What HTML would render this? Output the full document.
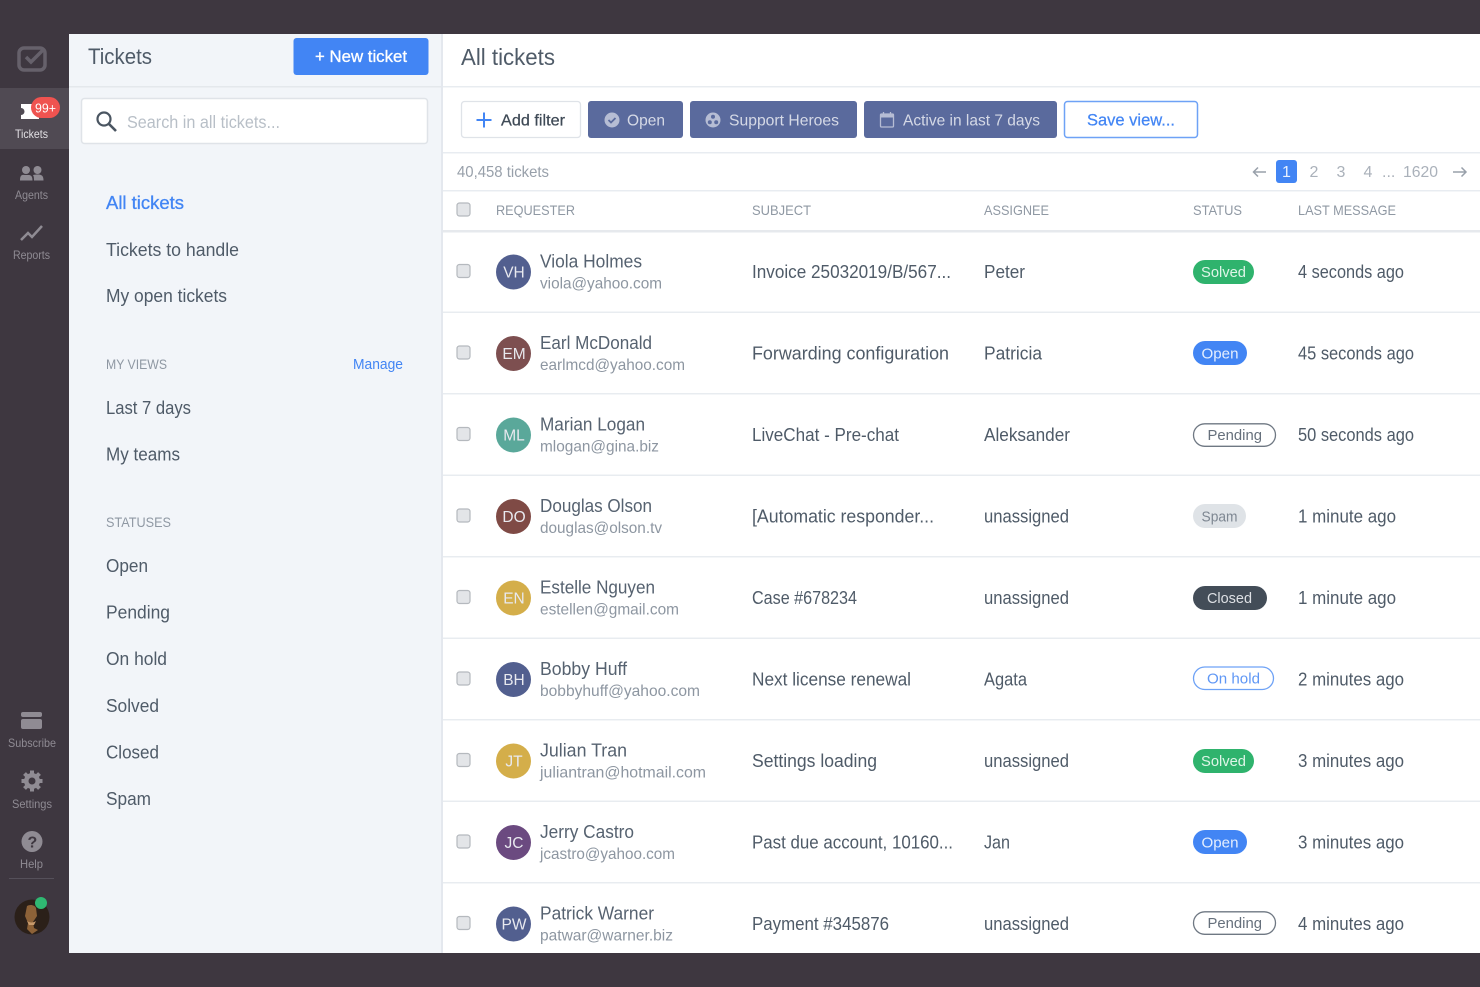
<!DOCTYPE html>
<html><head><meta charset="utf-8"><title>Tickets</title>
<style>
html,body{margin:0;padding:0;width:1480px;height:987px;overflow:hidden;background:#3e3740}
svg{display:block;filter:blur(.35px)}
text{font-family:"Liberation Sans",sans-serif}
.n{font-size:18px;fill:#566270}
.e{font-size:16px;fill:#8d96a1}
.t{font-size:18px;fill:#4f5b68}
.h{font-size:14px;fill:#8f98a3}
.s{font-size:12px;fill:#8f8b93}
.w{font-size:15px;fill:#fff}
.f{font-size:16px;fill:#d5d9e6}
.p{font-size:16px;fill:#aab1ba}
.i{fill:#8f8b93}
</style></head><body>
<svg xmlns="http://www.w3.org/2000/svg" width="1480" height="987" viewBox="0 0 1480 987">
<rect width="1480" height="987" fill="#3e3740"/>
<rect x="69" y="34" width="373" height="919" fill="#f2f5f9"/>
<rect x="441" y="34" width="2" height="919" fill="#e4e8ee"/>
<rect x="443" y="34" width="1037" height="919" fill="#fff"/>

<!-- sidebar -->
<rect x="0" y="88" width="69" height="61" fill="#504a53"/>
<rect x="19" y="48" width="26" height="22" rx="5" fill="none" stroke="#66616b" stroke-width="3.500"/>
<path d="M26 57l5 5 13-13" fill="none" stroke="#66616b" stroke-width="3.500"/>
<path d="M21 104h18v15H21v-4a3.500 3.500 0 0 0 0-7z" fill="#fff"/>
<rect x="31" y="97" width="29" height="21" rx="10.500" fill="#ef5350"/>
<text x="35" y="112.500" font-size="13" fill="#fff" textLength="21" lengthAdjust="spacingAndGlyphs">99+</text>
<text class="s" x="15" y="138" style="fill:#e2e0e4" textLength="33" lengthAdjust="spacingAndGlyphs">Tickets</text>
<circle cx="26" cy="170" r="4" class="i"/><circle cx="37.500" cy="170" r="4" class="i"/>
<path d="M20 180.500c0-7 3-5.500 6-5.500s6.500-1 6.500 5.500zM34 180.500c0-4-.5-4.500-1-5.500 2-.5 3-.5 4.500-.5 4 0 6 1 6 6z" class="i"/>
<text class="s" x="15" y="199" textLength="33" lengthAdjust="spacingAndGlyphs">Agents</text>
<path d="M21 240l7-7 4 4 10-11" fill="none" stroke="#8f8b93" stroke-width="2.500"/>
<text class="s" x="13" y="259" textLength="37" lengthAdjust="spacingAndGlyphs">Reports</text>
<rect x="21" y="712" width="21" height="5" rx="2" class="i"/><rect x="21" y="719" width="21" height="10" rx="2" class="i"/>
<text class="s" x="8" y="747" textLength="48" lengthAdjust="spacingAndGlyphs">Subscribe</text>
<path d="M32 770.500v21M21.500 781h21M24.500 773.500l15 15M39.500 773.500l-15 15" stroke="#8f8b93" stroke-width="4"/>
<circle cx="32" cy="781" r="8" class="i"/>
<circle cx="32" cy="781" r="3.500" fill="#3e3740"/>
<text class="s" x="12" y="808" textLength="40" lengthAdjust="spacingAndGlyphs">Settings</text>
<circle cx="32" cy="841.500" r="10.500" class="i"/>
<text x="27.500" y="847.500" font-size="16" font-weight="bold" fill="#3e3740">?</text>
<text class="s" x="20" y="868" textLength="23" lengthAdjust="spacingAndGlyphs">Help</text>
<rect x="9" y="878" width="45" height="1" fill="#55505a"/>
<circle cx="32" cy="917" r="17.500" fill="#2b2019"/>
<path d="M27 906c3-2 8-1 9 2l1 8-4 6 1 6 4 2-6 4-5-5 1-6-3-7z" fill="#8d6238"/>
<path d="M27 921c3 2 6 2 9 0l-2 4h-5z" fill="#c79a6c"/>
<circle cx="41" cy="903" r="6" fill="#2fb872"/>

<!-- left panel -->
<text x="88" y="64" font-size="22" fill="#4f5b68" textLength="64" lengthAdjust="spacingAndGlyphs">Tickets</text>
<rect x="293.500" y="38" width="135" height="37" rx="3" fill="#4285f4"/>
<text x="315" y="62" font-size="17" fill="#fff" stroke="#fff" stroke-width=".3" textLength="92" lengthAdjust="spacingAndGlyphs">+ New ticket</text>
<rect x="69" y="86" width="372" height="1.500" fill="#e4e8ec"/>
<rect x="81.500" y="98.500" width="346" height="45" rx="3" fill="#fff" stroke="#dfe3e8" stroke-width="1.500"/>
<circle cx="104" cy="119" r="6.500" fill="none" stroke="#4a5561" stroke-width="2.200"/>
<path d="M109 124l7 7" stroke="#4a5561" stroke-width="2.600"/>
<text x="127" y="128" font-size="17.500" fill="#b8bfc7" textLength="153" lengthAdjust="spacingAndGlyphs">Search in all tickets...</text>
<text x="106" y="209" font-size="18" fill="#4285f4" stroke="#4285f4" stroke-width=".3" textLength="78" lengthAdjust="spacingAndGlyphs">All tickets</text>
<text class="t" x="106" y="256" textLength="133" lengthAdjust="spacingAndGlyphs">Tickets to handle</text>
<text class="t" x="106" y="302" textLength="121" lengthAdjust="spacingAndGlyphs">My open tickets</text>
<text class="h" x="106" y="369" textLength="61" lengthAdjust="spacingAndGlyphs">MY VIEWS</text>
<text x="353" y="369" font-size="14.500" fill="#4285f4" textLength="50" lengthAdjust="spacingAndGlyphs">Manage</text>
<text class="t" x="106" y="414" textLength="85" lengthAdjust="spacingAndGlyphs">Last 7 days</text>
<text class="t" x="106" y="460.500" textLength="74" lengthAdjust="spacingAndGlyphs">My teams</text>
<text class="h" x="106" y="527" textLength="65" lengthAdjust="spacingAndGlyphs">STATUSES</text>
<text class="t" x="106" y="572" textLength="42" lengthAdjust="spacingAndGlyphs">Open</text>
<text class="t" x="106" y="618.500" textLength="64" lengthAdjust="spacingAndGlyphs">Pending</text>
<text class="t" x="106" y="665" textLength="61" lengthAdjust="spacingAndGlyphs">On hold</text>
<text class="t" x="106" y="712" textLength="53" lengthAdjust="spacingAndGlyphs">Solved</text>
<text class="t" x="106" y="758.500" textLength="53" lengthAdjust="spacingAndGlyphs">Closed</text>
<text class="t" x="106" y="805" textLength="45" lengthAdjust="spacingAndGlyphs">Spam</text>

<!-- main head -->
<text x="461" y="65" font-size="23" fill="#4f5b68" textLength="94" lengthAdjust="spacingAndGlyphs">All tickets</text>
<rect x="443" y="86" width="1037" height="1.500" fill="#e8ecf0"/>
<rect x="461.500" y="101.500" width="119" height="36" rx="3" fill="#fff" stroke="#dfe3e8" stroke-width="1.300"/>
<path d="M484 112.500v15M476.500 120h15" stroke="#4285f4" stroke-width="2"/>
<text x="501" y="125.500" font-size="16" fill="#3f4a56" stroke="#3f4a56" stroke-width=".25" textLength="64" lengthAdjust="spacingAndGlyphs">Add filter</text>
<rect x="588" y="101" width="95" height="37" rx="3" fill="#5a6a9d"/>
<circle cx="612" cy="120" r="7.500" fill="#b6bdd4"/>
<path d="M608.500 120l2.500 2.500 4.500-4.500" fill="none" stroke="#5a6a9d" stroke-width="1.800"/>
<text class="f" x="627" y="125.500" textLength="38" lengthAdjust="spacingAndGlyphs">Open</text>
<rect x="690" y="101" width="167" height="37" rx="3" fill="#5a6a9d"/>
<circle cx="713" cy="120" r="7.500" fill="#b6bdd4"/>
<circle cx="713" cy="116.800" r="2" fill="#5a6a9d"/><circle cx="709.800" cy="122.300" r="2" fill="#5a6a9d"/><circle cx="716.200" cy="122.300" r="2" fill="#5a6a9d"/>
<text class="f" x="729" y="125.500" textLength="110" lengthAdjust="spacingAndGlyphs">Support Heroes</text>
<rect x="864" y="101" width="193" height="37" rx="3" fill="#5a6a9d"/>
<rect x="880.500" y="114" width="13" height="13" rx="1" fill="none" stroke="#b6bdd4" stroke-width="1.300"/>
<rect x="880.500" y="114" width="13" height="3.500" fill="#b6bdd4"/>
<path d="M883.500 112v3M890.500 112v3" stroke="#b6bdd4" stroke-width="1.300"/>
<text class="f" x="903" y="125.500" textLength="137" lengthAdjust="spacingAndGlyphs">Active in last 7 days</text>
<rect x="1064.500" y="101.500" width="133" height="36" rx="3" fill="#fff" stroke="#6ea2f6" stroke-width="1.500"/>
<text x="1087" y="125.500" font-size="17" fill="#4285f4" stroke="#4285f4" stroke-width=".25" textLength="88" lengthAdjust="spacingAndGlyphs">Save view...</text>
<rect x="443" y="152" width="1037" height="1.500" fill="#e8ecf1"/>
<text class="p" x="457" y="177" style="fill:#98a0aa" textLength="92" lengthAdjust="spacingAndGlyphs">40,458 tickets</text>
<path d="M1266 172h-12M1258 167.500l-4.500 4.500 4.500 4.500" fill="none" stroke="#98a0aa" stroke-width="1.500"/>
<rect x="1276" y="160" width="21" height="23" rx="3" fill="#4285f4"/>
<text x="1282" y="177" font-size="16" fill="#e8f0fe">1</text>
<text class="p" x="1309.500" y="177">2</text>
<text class="p" x="1336.500" y="177">3</text>
<text class="p" x="1363.500" y="177">4</text>
<text class="p" x="1382" y="177">...</text>
<text class="p" x="1403" y="177" textLength="35" lengthAdjust="spacingAndGlyphs">1620</text>
<path d="M1453 172h13M1461.500 167.500l4.500 4.500-4.500 4.500" fill="none" stroke="#98a0aa" stroke-width="1.500"/>
<rect x="443" y="190" width="1037" height="1.500" fill="#e8ecf1"/>
<rect x="457" y="203" width="13" height="13" rx="2.500" fill="#e3e5e8" stroke="#b5b9be" stroke-width="1.200"/>
<text class="h" x="496" y="215" textLength="79" lengthAdjust="spacingAndGlyphs">REQUESTER</text>
<text class="h" x="752" y="215" textLength="59" lengthAdjust="spacingAndGlyphs">SUBJECT</text>
<text class="h" x="984" y="215" textLength="65" lengthAdjust="spacingAndGlyphs">ASSIGNEE</text>
<text class="h" x="1193" y="215" textLength="49" lengthAdjust="spacingAndGlyphs">STATUS</text>
<text class="h" x="1298" y="215" textLength="98" lengthAdjust="spacingAndGlyphs">LAST MESSAGE</text>
<rect x="443" y="230" width="1037" height="2.500" fill="#e6e9ed"/>

<!-- row separators -->
<g fill="#e8ecf0">
<rect x="443" y="311.500" width="1037" height="1.500"/>
<rect x="443" y="393" width="1037" height="1.500"/>
<rect x="443" y="474.500" width="1037" height="1.500"/>
<rect x="443" y="556" width="1037" height="1.500"/>
<rect x="443" y="637.500" width="1037" height="1.500"/>
<rect x="443" y="719" width="1037" height="1.500"/>
<rect x="443" y="800.500" width="1037" height="1.500"/>
<rect x="443" y="882" width="1037" height="1.500"/>
</g>

<!-- checkboxes -->
<g fill="#e3e5e8" stroke="#b5b9be" stroke-width="1.200">
<rect x="457" y="264.500" width="13" height="13" rx="2.500"/>
<rect x="457" y="346" width="13" height="13" rx="2.500"/>
<rect x="457" y="427.500" width="13" height="13" rx="2.500"/>
<rect x="457" y="509" width="13" height="13" rx="2.500"/>
<rect x="457" y="590.500" width="13" height="13" rx="2.500"/>
<rect x="457" y="672" width="13" height="13" rx="2.500"/>
<rect x="457" y="753.500" width="13" height="13" rx="2.500"/>
<rect x="457" y="835" width="13" height="13" rx="2.500"/>
<rect x="457" y="916.500" width="13" height="13" rx="2.500"/>
</g>

<!-- avatars -->
<circle cx="513.500" cy="272" r="17.500" fill="#525f8f"/>
<circle cx="513.500" cy="353.500" r="17.500" fill="#7d4f50"/>
<circle cx="513.500" cy="435" r="17.500" fill="#5aa89a"/>
<circle cx="513.500" cy="516.500" r="17.500" fill="#7f4a45"/>
<circle cx="513.500" cy="598" r="17.500" fill="#d4ae4a"/>
<circle cx="513.500" cy="679.500" r="17.500" fill="#525f8f"/>
<circle cx="513.500" cy="761" r="17.500" fill="#d4ae4a"/>
<circle cx="513.500" cy="842.500" r="17.500" fill="#6b4a80"/>
<circle cx="513.500" cy="924" r="17.500" fill="#525f8f"/>
<g font-size="15.500" fill="#e8e9ef" text-anchor="middle">
<text x="514" y="277.500">VH</text><text x="514" y="359">EM</text><text x="514" y="440.500">ML</text><text x="514" y="522">DO</text><text x="514" y="603.500">EN</text><text x="514" y="685">BH</text><text x="514" y="766.500">JT</text><text x="514" y="848">JC</text><text x="514" y="929.500">PW</text>
</g>

<!-- row 1 -->
<text class="n" x="540" y="267.500" textLength="102" lengthAdjust="spacingAndGlyphs">Viola Holmes</text>
<text class="e" x="540" y="288.500" textLength="122" lengthAdjust="spacingAndGlyphs">viola@yahoo.com</text>
<text class="t" x="752" y="278" textLength="199" lengthAdjust="spacingAndGlyphs">Invoice 25032019/B/567...</text>
<text class="t" x="984" y="278" textLength="41" lengthAdjust="spacingAndGlyphs">Peter</text>
<rect x="1193" y="260" width="61" height="24" rx="12" fill="#2fb36d"/>
<text class="w" x="1201" y="277" style="fill:#dff5e8" textLength="45" lengthAdjust="spacingAndGlyphs">Solved</text>
<text class="t" x="1298" y="278" textLength="106" lengthAdjust="spacingAndGlyphs">4 seconds ago</text>
<!-- row 2 -->
<text class="n" x="540" y="349" textLength="112" lengthAdjust="spacingAndGlyphs">Earl McDonald</text>
<text class="e" x="540" y="370" textLength="145" lengthAdjust="spacingAndGlyphs">earlmcd@yahoo.com</text>
<text class="t" x="752" y="359.500" textLength="197" lengthAdjust="spacingAndGlyphs">Forwarding configuration</text>
<text class="t" x="984" y="359.500" textLength="58" lengthAdjust="spacingAndGlyphs">Patricia</text>
<rect x="1193" y="341" width="54" height="24" rx="12" fill="#4285f4"/>
<text class="w" x="1201.500" y="358.500" style="fill:#e4eefe" textLength="37" lengthAdjust="spacingAndGlyphs">Open</text>
<text class="t" x="1298" y="359.500" textLength="116" lengthAdjust="spacingAndGlyphs">45 seconds ago</text>
<!-- row 3 -->
<text class="n" x="540" y="430.500" textLength="105" lengthAdjust="spacingAndGlyphs">Marian Logan</text>
<text class="e" x="540" y="451.500" textLength="119" lengthAdjust="spacingAndGlyphs">mlogan@gina.biz</text>
<text class="t" x="752" y="441" textLength="147" lengthAdjust="spacingAndGlyphs">LiveChat - Pre-chat</text>
<text class="t" x="984" y="441" textLength="86" lengthAdjust="spacingAndGlyphs">Aleksander</text>
<rect x="1193.500" y="423.800" width="82" height="22.500" rx="11.250" fill="#fff" stroke="#6f7883" stroke-width="1.300"/>
<text class="w" x="1207.500" y="440" style="fill:#66707c" textLength="54.500" lengthAdjust="spacingAndGlyphs">Pending</text>
<text class="t" x="1298" y="441" textLength="116" lengthAdjust="spacingAndGlyphs">50 seconds ago</text>
<!-- row 4 -->
<text class="n" x="540" y="512" textLength="112" lengthAdjust="spacingAndGlyphs">Douglas Olson</text>
<text class="e" x="540" y="533" textLength="122" lengthAdjust="spacingAndGlyphs">douglas@olson.tv</text>
<text class="t" x="752" y="522.500" textLength="182" lengthAdjust="spacingAndGlyphs">[Automatic responder...</text>
<text class="t" x="984" y="522.500" textLength="85" lengthAdjust="spacingAndGlyphs">unassigned</text>
<rect x="1193" y="504" width="53" height="24" rx="12" fill="#dfe3e7"/>
<text class="w" x="1201.500" y="521.500" style="fill:#7e8792" textLength="36" lengthAdjust="spacingAndGlyphs">Spam</text>
<text class="t" x="1298" y="522.500" textLength="98" lengthAdjust="spacingAndGlyphs">1 minute ago</text>
<!-- row 5 -->
<text class="n" x="540" y="593.500" textLength="115" lengthAdjust="spacingAndGlyphs">Estelle Nguyen</text>
<text class="e" x="540" y="614.500" textLength="139" lengthAdjust="spacingAndGlyphs">estellen@gmail.com</text>
<text class="t" x="752" y="604" textLength="105" lengthAdjust="spacingAndGlyphs">Case #678234</text>
<text class="t" x="984" y="604" textLength="85" lengthAdjust="spacingAndGlyphs">unassigned</text>
<rect x="1193" y="586" width="74" height="24" rx="12" fill="#434d58"/>
<text class="w" x="1207" y="603" style="fill:#dde0e4" textLength="45" lengthAdjust="spacingAndGlyphs">Closed</text>
<text class="t" x="1298" y="604" textLength="98" lengthAdjust="spacingAndGlyphs">1 minute ago</text>
<!-- row 6 -->
<text class="n" x="540" y="675" textLength="87" lengthAdjust="spacingAndGlyphs">Bobby Huff</text>
<text class="e" x="540" y="696" textLength="160" lengthAdjust="spacingAndGlyphs">bobbyhuff@yahoo.com</text>
<text class="t" x="752" y="685.500" textLength="159" lengthAdjust="spacingAndGlyphs">Next license renewal</text>
<text class="t" x="984" y="685.500" textLength="43" lengthAdjust="spacingAndGlyphs">Agata</text>
<rect x="1193.500" y="667" width="80" height="22.500" rx="11.250" fill="#fff" stroke="#6ea2f6" stroke-width="1.300"/>
<text class="w" x="1207" y="683.500" style="fill:#5f97f5" textLength="53" lengthAdjust="spacingAndGlyphs">On hold</text>
<text class="t" x="1298" y="685.500" textLength="106" lengthAdjust="spacingAndGlyphs">2 minutes ago</text>
<!-- row 7 -->
<text class="n" x="540" y="756.500" textLength="87" lengthAdjust="spacingAndGlyphs">Julian Tran</text>
<text class="e" x="540" y="777.500" textLength="166" lengthAdjust="spacingAndGlyphs">juliantran@hotmail.com</text>
<text class="t" x="752" y="767" textLength="125" lengthAdjust="spacingAndGlyphs">Settings loading</text>
<text class="t" x="984" y="767" textLength="85" lengthAdjust="spacingAndGlyphs">unassigned</text>
<rect x="1193" y="749" width="61" height="24" rx="12" fill="#2fb36d"/>
<text class="w" x="1201" y="766" style="fill:#dff5e8" textLength="45" lengthAdjust="spacingAndGlyphs">Solved</text>
<text class="t" x="1298" y="767" textLength="106" lengthAdjust="spacingAndGlyphs">3 minutes ago</text>
<!-- row 8 -->
<text class="n" x="540" y="838" textLength="94" lengthAdjust="spacingAndGlyphs">Jerry Castro</text>
<text class="e" x="540" y="859" textLength="135" lengthAdjust="spacingAndGlyphs">jcastro@yahoo.com</text>
<text class="t" x="752" y="848.500" textLength="201" lengthAdjust="spacingAndGlyphs">Past due account, 10160...</text>
<text class="t" x="984" y="848.500" textLength="26" lengthAdjust="spacingAndGlyphs">Jan</text>
<rect x="1193" y="830" width="54" height="24" rx="12" fill="#4285f4"/>
<text class="w" x="1201.500" y="847.500" style="fill:#e4eefe" textLength="37" lengthAdjust="spacingAndGlyphs">Open</text>
<text class="t" x="1298" y="848.500" textLength="106" lengthAdjust="spacingAndGlyphs">3 minutes ago</text>
<!-- row 9 -->
<text class="n" x="540" y="919.500" textLength="114" lengthAdjust="spacingAndGlyphs">Patrick Warner</text>
<text class="e" x="540" y="940.500" textLength="133" lengthAdjust="spacingAndGlyphs">patwar@warner.biz</text>
<text class="t" x="752" y="930" textLength="137" lengthAdjust="spacingAndGlyphs">Payment #345876</text>
<text class="t" x="984" y="930" textLength="85" lengthAdjust="spacingAndGlyphs">unassigned</text>
<rect x="1193.500" y="911.800" width="82" height="22.500" rx="11.250" fill="#fff" stroke="#6f7883" stroke-width="1.300"/>
<text class="w" x="1207.500" y="928" style="fill:#66707c" textLength="54.500" lengthAdjust="spacingAndGlyphs">Pending</text>
<text class="t" x="1298" y="930" textLength="106" lengthAdjust="spacingAndGlyphs">4 minutes ago</text>

<rect x="0" y="953" width="1480" height="34" fill="#3e3740"/>
</svg>
</body></html>
